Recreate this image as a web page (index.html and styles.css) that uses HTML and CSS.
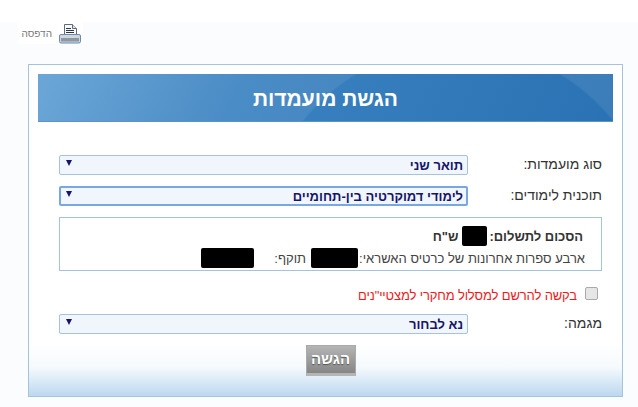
FILE: index.html
```html
<!DOCTYPE html>
<html lang="he" dir="rtl">
<head>
  <meta charset="UTF-8">
  <title>הגשת מועמדות</title>
  <link rel="stylesheet" href="styles.css">
</head>

<body>

  <div class="print-row">
    <a class="print-link" href="#">
      <svg class="print-icon" width="24" height="20" viewBox="0 0 24 20">
        <path d="M6.500 .5h8l4 4v8h-12z" fill="#f6f8fb" stroke="#5f6b78"/>
        <path d="M14.500 .5v4h4" fill="#dfe4ea" stroke="#5f6b78"/>
        <path d="M8 4.500h5M8 6.500h8M8 8.500h8" stroke="#2f363d" stroke-width="1.200"/>
        <path d="M3 10.500h18a1.500 1.500 0 0 1 1.500 1.500v5.500a1.500 1.500 0 0 1-1.500 1.500H3a1.500 1.500 0 0 1-1.500-1.500V12A1.500 1.500 0 0 1 3 10.500z" fill="#cfd6de" stroke="#6d8aa8"/>
        <path d="M3 14h18v3.500H3z" fill="#8d98a5"/>
      </svg>
      <span>הדפסה</span>
    </a>
  </div>

  <form class="panel">
    <h1 class="panel-title">הגשת מועמדות</h1>

    <div class="field">
      <label>סוג מועמדות:</label>
      <div class="select">
        <span>תואר שני</span>
        <i class="arrow"></i>
      </div>
    </div>

    <div class="field">
      <label>תוכנית לימודים:</label>
      <div class="select focused">
        <span>לימודי דמוקרטיה בין-תחומיים</span>
        <i class="arrow"></i>
      </div>
    </div>

    <div class="pay-box">
      <div class="pay-sum">
        <b>הסכום לתשלום:</b>
        <span class="hidden-value sum"></span>
        <b>ש"ח</b>
      </div>
      <div class="pay-card">
        <span>ארבע ספרות אחרונות של כרטיס האשראי:</span>
        <span class="hidden-value digits"></span>
        <span class="valid-label">תוקף:</span>
        <span class="hidden-value expiry"></span>
      </div>
    </div>

    <div class="check-row">
      <input type="checkbox" id="research">
      <label for="research">בקשה להרשם למסלול מחקרי למצטיי"נים</label>
    </div>

    <div class="field">
      <label>מגמה:</label>
      <div class="select">
        <span>נא לבחור</span>
        <i class="arrow"></i>
      </div>
    </div>

    <div class="submit-row">
      <button type="button" class="submit-btn">הגשה</button>
    </div>
  </form>

</body>
</html>
```

FILE: styles.css
```css
html {
  background-color: #fff;
}

body {
  margin: 0;
  padding-top: 22px;
  height: 385px;
  overflow: hidden;
  background: linear-gradient(#fff 22px, #fbfcfe 22px);
  font-family: "Liberation Sans", Arial, sans-serif;
  color: #333;
}

.print-row {
  height: 42px;
  display: flex;
  justify-content: flex-end;
}

.print-link {
  display: flex;
  align-items: center;
  gap: 6px;
  height: 22px;
  width: 65px;
  margin-left: 18px;
  padding: 1px 1px 0 0;
  box-sizing: border-box;
  background-color: #fff;
  color: #777;
  font-size: 10px;
  text-decoration: none;
}

/* Main panel */
.panel {
  box-sizing: border-box;
  width: 595px;
  height: 333px;
  margin-right: 15px;
  padding: 9px 9px 0 9px;
  border: 1px solid #a6c3de;
  background: linear-gradient(to bottom, #fff 0, #fff 278px, #f6fafd 302px, #bcd8ef 100%);
}

.panel-title {
  height: 48px;
  margin: 0 0 33px 0;
  line-height: 49px;
  text-align: center;
  font-size: 21px;
  color: #fff;
  background:
    radial-gradient(circle 199px at 420px 170px, transparent 99%, rgba(255, 255, 255, 0.08) 100%),
    linear-gradient(115deg, #5f9fd3 0, #3b82c1 35%, #2a72b3 100%);
  border-bottom: 1px solid #5d93c4;
  box-sizing: border-box;
}

.field {
  display: flex;
  align-items: center;
  height: 20px;
  margin-bottom: 11px;
}

.field label {
  width: 145px;
  padding: 0 11px 2px 0;
  box-sizing: border-box;
  font-size: 14px;
  color: #333;
}

.select {
  display: flex;
  justify-content: space-between;
  align-items: center;
  box-sizing: border-box;
  width: 409px;
  height: 20px;
  padding: 0 4px 0 6px;
  border: 1px solid #a6c3de;
  border-radius: 2px;
  background-color: #f1f6fd;
  color: #15156b;
  font-size: 13px;
  font-weight: bold;
}

.select.focused {
  border: 2px solid #78a6e6;
  padding: 0 3px 0 5px;
}

.arrow {
  width: 0;
  height: 0;
  margin-bottom: 5px;
  border-top: 6px solid #15156b;
  border-left: 3.5px solid transparent;
  border-right: 3.5px solid transparent;
}

.pay-box {
  box-sizing: border-box;
  width: 543px;
  height: 54px;
  margin-right: 11px;
  padding: 7px 16px 0 0;
  border: 1px solid #a6c3de;
  background-color: #fff;
  font-size: 13px;
}

.pay-sum {
  display: flex;
  align-items: center;
  height: 22px;
  padding-right: 2px;
}

.pay-card {
  display: flex;
  align-items: center;
  height: 22px;
  color: #444;
}

.hidden-value {
  display: inline-block;
  height: 20px;
  background-color: #000;
  border-radius: 2px;
}

.hidden-value.sum {
  width: 25px;
  margin: 0 2px 0 4px;
}

.hidden-value.digits {
  width: 47px;
  margin-right: 1px;
}

.hidden-value.expiry {
  width: 53px;
  margin-right: 20px;
}

.valid-label {
  margin-right: 5px;
}

.check-row {
  display: flex;
  align-items: center;
  height: 20px;
  margin: 12px 15px 11px 0;
}

.check-row input {
  width: 13px;
  height: 13px;
  margin: 0 0 0 8px;
  appearance: none;
  border: 1px solid #aaa;
  border-radius: 2px;
  background-color: #e6e6e6;
}

.check-row label {
  padding-top: 4px;
  color: #f01818;
  font-size: 13px;
  letter-spacing: -0.14px;
}

.submit-row {
  display: flex;
  justify-content: center;
  padding-left: 10px;
}

.submit-btn {
  width: 50px;
  height: 31px;
  padding: 0 0 2px 0;
  border: 1px solid #aaa;
  border-bottom: 3px solid #b5b5b5;
  background: linear-gradient(#b4b4b4, #868686);
  color: #fff;
  font-family: "Liberation Sans", Arial, sans-serif;
  font-size: 15px;
  font-weight: bold;
  text-shadow: 0 1px 1px #555;
}
```
